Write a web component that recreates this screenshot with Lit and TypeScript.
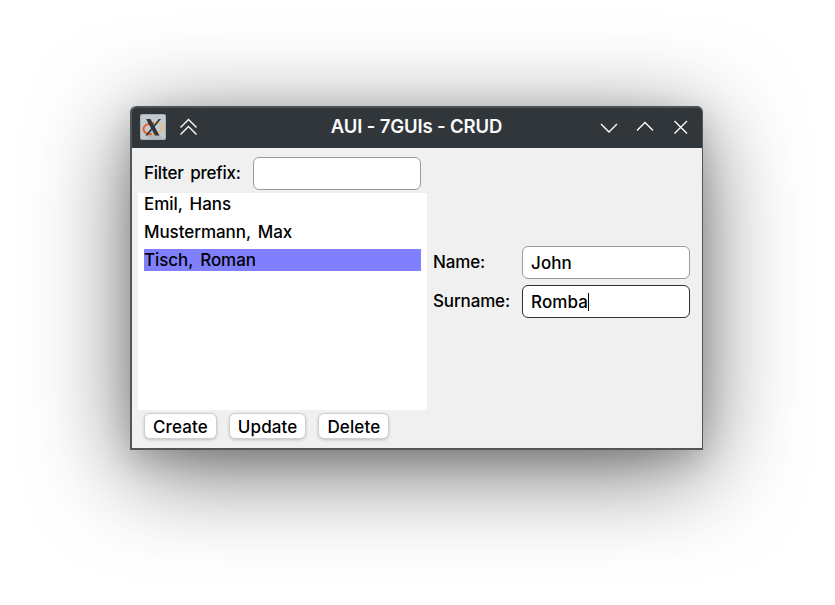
import { LitElement, html, css } from "lit";
import { customElement, property, state } from "lit/decorators.js";
import { classMap } from "lit/directives/class-map.js";

const base = css`
  * { box-sizing: border-box; }
  :host { box-sizing: border-box; font-family: Inter, "Liberation Sans", sans-serif; }
`;

@customElement("title-bar")
class TitleBar extends LitElement {
  @property() heading = "";
  static styles = [base, css`
    :host { display: grid; grid-template-columns: 1fr auto 1fr; align-items: center;
      height: 42px; padding: 0 9px 2px 8px; background: #31363b; color: #fcfcfc;
      border-radius: 5px 5px 0 0; border-top: 2px solid #4d5256; }
    .left, .right { display: flex; align-items: center; }
    .left { gap: 11px; }
    .right { justify-content: flex-end; gap: 12px; }
    .title { font-size: 18.5px; font-weight: 600; line-height: 22px; padding-bottom: 2px; letter-spacing: -0.13px; white-space: pre; }
    svg { display: block; }
    .glyph { fill: none; stroke: #fcfcfc; stroke-width: 1.4; }
  `];
  render() {
    return html`
      <div class="left">
        <svg width="26" height="26" viewBox="0 0 26 26">
          <rect x="0" y="0" width="26" height="26" rx="2" fill="#a9b1b5"/>
          <rect x="1" y="1" width="24" height="24" rx="1.5" fill="#c3cbcf"/>
          <path d="M6 22 L12 17 L20 21.500 L23 25 H9Z" fill="#a5adb2" opacity=".6"/>
          <path d="M15 8.500 C21 8.500 23.500 11.500 22.300 14.500 C20.800 18.500 16 20.300 12 20.300" fill="none" stroke="#f2b867" stroke-width="1.500"/>
          <path d="M14 9 C8 9 3.500 11.500 3.500 15 C3.500 18.500 7 20.500 12 20.300" fill="none" stroke="#ee5a24" stroke-width="1.800"/>
          <path d="M6 5 H10.500 L19.500 21.500 H15Z" fill="#30363a"/>
          <path d="M18.800 5 H21 L7.500 21.500 H5.300Z" fill="#30363a"/>
        </svg>
        <svg class="glyph" width="24" height="24" viewBox="0 0 24 24"><path d="M3.500 12.500 L11.500 4.500 L19.500 12.500 M3.500 19.500 L11.500 11.500 L19.500 19.500"/></svg>
      </div>
      <div class="title">${this.heading}</div>
      <div class="right">
        <svg class="glyph" width="24" height="24" viewBox="0 0 24 24"><path d="M4 9 L12 17 L20 9"/></svg>
        <svg class="glyph" width="24" height="24" viewBox="0 0 24 24"><path d="M4 15.500 L12 7.500 L20 15.500"/></svg>
        <svg class="glyph" width="24" height="24" viewBox="0 0 24 24"><path d="M5.500 6 L18 18.500 M18 6 L5.500 18.500"/></svg>
      </div>`;
  }
}

@customElement("text-field")
class TextField extends LitElement {
  @property() value = "";
  @property({ type: Boolean }) active = false;
  static styles = [base, css`
    :host { display: block; width: 168px; height: 33px; }
    .field { display: flex; align-items: center; height: 33px; padding: 0 8px; background: #fff;
      border: 1px solid #9b9b9b; border-radius: 6px; font-size: 17px; font-weight: 500; line-height: 20px;
      letter-spacing: 0.1px; color: #000; }
    .active { border-color: #303030; }
    .caret { width: 1px; height: 18px; background: #000; }
  `];
  render() {
    return html`<div class=${classMap({ field: true, active: this.active })}>
      <span>${this.value}</span>${this.active ? html`<i class="caret"></i>` : ""}
    </div>`;
  }
}

@customElement("app-root")
class AppRoot extends LitElement {
  @state() people = ["Emil, Hans", "Mustermann, Max", "Tisch, Roman"];
  @state() selected = 2;
  static styles = [base, css`
    :host { display: block; width: 835px; height: 605px; overflow: hidden; background: #fff; padding: 106px 132px 0 130px; }
    .window { width: 573px; height: 344px; border: solid #50565a; border-width: 0 1px 2px 2px;
      border-radius: 6px 6px 0 0; background: #f0f0f0; color: #000;
      font-size: 17px; font-weight: 500; line-height: 20px;
      box-shadow: 0 20px 96px rgba(0,0,0,.58), 0 10px 30px rgba(0,0,0,.15); }
    .body { display: grid; grid-template-columns: 289px 1fr; column-gap: 6px; height: 300px; padding: 9px 12px 0 6px; }
    .filter { display: flex; align-items: center; justify-content: space-between; height: 33px; padding: 0 6px; margin-bottom: 3px; }
    .label { padding-bottom: 2px; letter-spacing: -0.15px; white-space: nowrap; }
    .filter .label { letter-spacing: -0.25px; word-spacing: 2.500px; }
    .list { height: 217px; padding: 0 6px; background: #fff; display: flex; flex-direction: column; gap: 6px; }
    .item { height: 22px; line-height: 23px; letter-spacing: -0.060px; word-spacing: 2.500px; white-space: nowrap; }
    .selected { background: #8080ff; }
    .actions { display: flex; gap: 12px; padding: 3px 6px 0; }
    .button { height: 26px; padding: 0 8px; border: 1px solid #cfcfcf; border-radius: 6px; background: #fff;
      line-height: 26px; letter-spacing: 0.120px; box-shadow: 0 1px 3px rgba(0,0,0,.2); }
    .form { display: flex; flex-direction: column; gap: 6px; padding-top: 89px; }
    .row { display: flex; align-items: center; justify-content: space-between; }
  `];
  render() {
    return html`<div class="window">
      <title-bar heading="AUI - 7GUIs - CRUD"></title-bar>
      <div class="body">
        <div>
          <div class="filter"><span class="label">Filter prefix:</span><text-field></text-field></div>
          <div class="list">${this.people.map((p, i) => html`
            <div class=${classMap({ item: true, selected: i === this.selected })}>${p}</div>`)}</div>
          <div class="actions">${["Create", "Update", "Delete"].map((t) => html`<div class="button">${t}</div>`)}</div>
        </div>
        <div class="form">
          <div class="row"><span class="label">Name:</span><text-field value="John"></text-field></div>
          <div class="row"><span class="label">Surname:</span><text-field value="Romba" active></text-field></div>
        </div>
      </div>
    </div>`;
  }
}
